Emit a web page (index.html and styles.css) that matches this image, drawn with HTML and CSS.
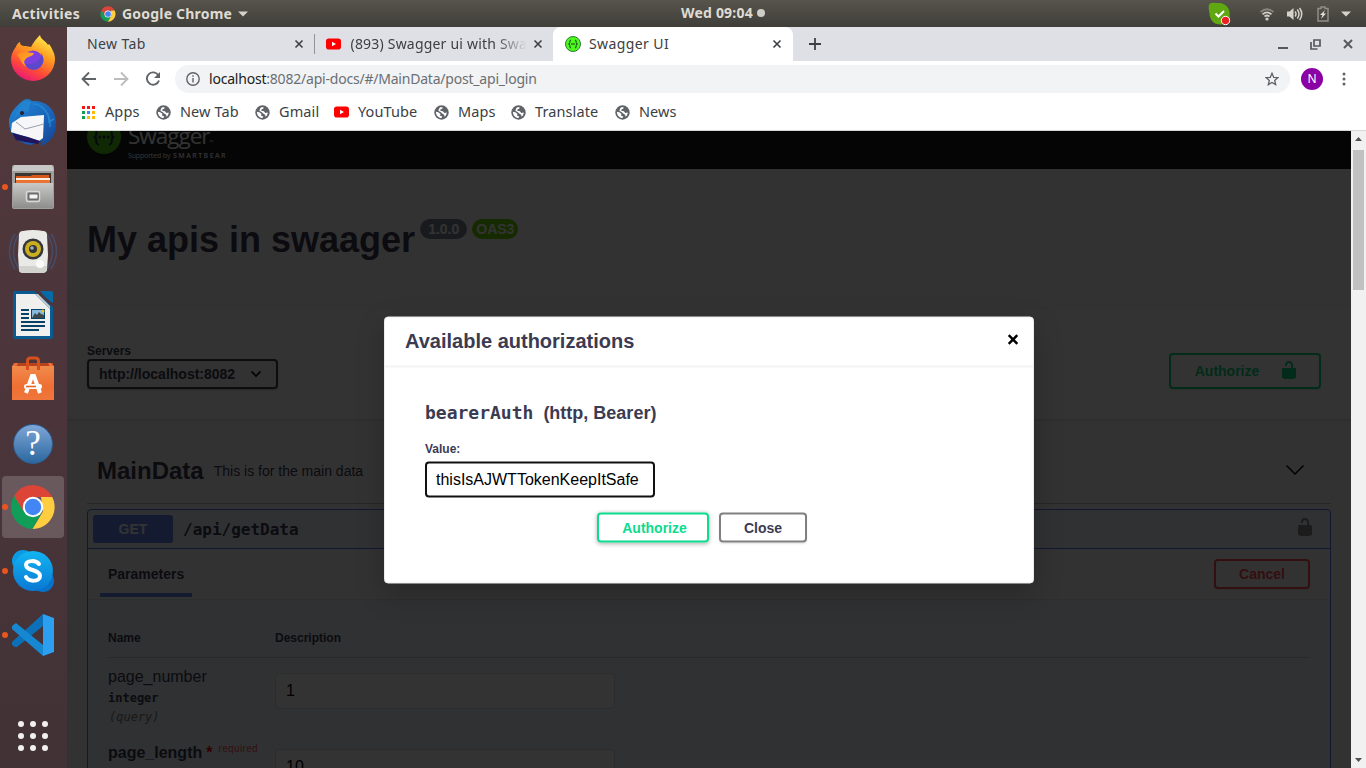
FILE: index.html
```html
<!DOCTYPE html>
<html lang="en">
<head>
<meta charset="utf-8">
<title>Swagger UI</title>
<link rel="stylesheet" href="styles.css">
</head>
<body>
<svg class="defs" width="0" height="0">
  <defs>
    <linearGradient id="fox" x1="0.8" y1="0" x2="0.3" y2="1"><stop offset="0" stop-color="#fff44f"/><stop offset=".4" stop-color="#ff9a20"/><stop offset=".72" stop-color="#ff4a38"/><stop offset="1" stop-color="#e8167a"/></linearGradient>
    <linearGradient id="foxhead" x1="0" y1="0" x2="1" y2="1"><stop offset="0" stop-color="#ff8a1e"/><stop offset="1" stop-color="#ffb52a"/></linearGradient>
    <linearGradient id="bird" x1="0" y1="0" x2="1" y2="1"><stop offset="0" stop-color="#1f8ad8"/><stop offset=".6" stop-color="#1b62b8"/><stop offset="1" stop-color="#153f8c"/></linearGradient>
    <linearGradient id="steel" x1="0" y1="0" x2="0" y2="1"><stop offset="0" stop-color="#c9c9c7"/><stop offset="1" stop-color="#8e8e8c"/></linearGradient>
    <linearGradient id="bag" x1="0" y1="0" x2="0" y2="1"><stop offset="0" stop-color="#f08b4c"/><stop offset=".6" stop-color="#ef6f32"/><stop offset="1" stop-color="#f0763c"/></linearGradient>
    <linearGradient id="skype" x1="0" y1="0" x2="0" y2="1"><stop offset="0" stop-color="#12b5f2"/><stop offset="1" stop-color="#0a78d4"/></linearGradient>
    <symbol id="chrome" viewBox="0 0 46 46">
      <path d="M23 1A22 22 0 0 0 4 12l9 16 10-15h19.200A22 22 0 0 0 23 1z" fill="#db4437"/>
      <path d="M4 12a22 22 0 0 0 18.500 33L32 28 14 28z" fill="#0f9d58"/>
      <path d="M42.200 13A22 22 0 0 1 22.500 45L33 27.500 31 13z" fill="#ffcd40"/>
      <circle cx="23" cy="23" r="10.200" fill="#fff"/><circle cx="23" cy="23" r="8.200" fill="#4285f4"/>
    </symbol>
    <symbol id="globe" viewBox="0 0 16 16"><circle cx="8" cy="8" r="7.700" fill="#5f6368"/><path d="M2 7.200 4.500 7.800 6.800 9.400 6.600 11.600 8.800 12 8 13.900C5 14 2.200 11.500 2 7.200zM6.500 2.400 9.200 2.300 8.800 4 6.700 4.700 6.800 6.100 9.500 6.600 11 8.400 13.500 8C13.600 10 12.500 11.800 11.300 12.400L10.800 10.300 8.800 9.100 7 7.500 4.800 6.300 5.200 4.300z" fill="#fff"/></symbol>
    <symbol id="tube" viewBox="0 0 15 12"><rect y=".5" width="15" height="11" rx="2.800" fill="#f00"/><path d="m6 3.700 4 2.300-4 2.300z" fill="#fff"/></symbol>
    <symbol id="x" viewBox="0 0 10 10"><path d="m1.500 1.500 7 7m0-7-7 7" stroke="#3c4043" stroke-width="1.600"/></symbol>
    <symbol id="lock" viewBox="0 0 20 20"><path d="M15.800 8H14V5.600C14 2.703 12.665 1 10 1 7.334 1 6 2.703 6 5.600V6h2v-.801C8 3.754 8.797 3 10 3c1.203 0 2 .754 2 2.199V8H4c-.553 0-1 .646-1 1.199V17c0 .549.428 1.139.951 1.307l1.197.387C5.672 18.861 6.550 19 7.100 19h5.800c.549 0 1.428-.139 1.951-.307l1.196-.387c.524-.167.953-.757.953-1.306V9.199C17 8.646 16.352 8 15.800 8z" fill="currentColor"/></symbol>
  </defs>
</svg>

<header class="panel">
  <div class="panel-left">
    <span class="activities">Activities</span>
    <svg width="16" height="16"><use href="#chrome"/></svg>
    <span class="appname">Google Chrome</span>
    <svg width="10" height="6"><path d="M0 .5h10L5 5.500z" fill="#d5d2cc"/></svg>
  </div>
  <div class="clock">Wed 09:04<i></i></div>
  <div class="tray">
    <svg class="tray-skype" width="24" height="24" viewBox="0 0 24 24"><path d="M2 1.500C4 0 8 1 11 1a10.500 10.500 0 0 1 10.500 12c1.500 5-2 10-8 9.500C6 23 1.500 18 1.500 11 .5 7 .3 3 2 1.500z" fill="#5fa812"/><path d="m7.500 11.500 3 3 5.500-5.500" fill="none" stroke="#fff" stroke-width="2"/><circle cx="17.500" cy="18.500" r="4.200" fill="#eb2020" stroke="#fff"/></svg>
    <svg class="tray-wifi" width="16" height="14" viewBox="0 0 16 14" fill="none" stroke="#d0cdc7" stroke-width="1.700"><path d="M1.500 5Q8-.5 14.500 5" opacity=".45"/><path d="M3.500 7.300q4.500-4 9 0M5.500 9.500q2.500-2 5 0"/><circle cx="8" cy="12" r="1.600" fill="#d0cdc7" stroke="none"/></svg>
    <svg class="tray-vol" width="17" height="14" viewBox="0 0 17 14"><path d="M1 4.500h2.500L7.500 1v12l-4-3.500H1z" fill="#d5d2cc"/><path d="M9 4.500q2 2.500 0 5M11.300 2.500q3.500 4.500 0 9M13.600 1q4.300 6 0 12" fill="none" stroke="#d5d2cc" stroke-width="1.500"/></svg>
    <svg class="tray-bat" width="12" height="16" viewBox="0 0 12 16"><path d="M1 2.500h3v-1.500h4v1.500h3v12.500H1z" fill="none" stroke="#908d87" stroke-width="1.500"/><path d="m8 4-5 5h2.500L4 13l5-5.500H6.500z" fill="#e5e2dd"/></svg>
    <svg width="10" height="6"><path d="M0 .5h10L5 5.500z" fill="#d5d2cc"/></svg>
  </div>
</header>

<div class="desktop">
  <nav class="dock">
    <div class="app"><svg width="46" height="48" viewBox="0 0 46 48"><path d="M5 13c1 0 1-4 5-6 0 3 2 4 5 4 2 0 5 1 6 1C23 8 26 4 30 0c1 5 5 5 8 10l1-1c3 4 6 10 6 15a22 22 0 0 1-44 0C1 20 3 16 5 13z" fill="url(#fox)"/><circle cx="23" cy="25" r="9.500" fill="#7d3fe0"/><path d="M15 29a9.500 9.500 0 0 0 17 1c3-5 1-9-1-12 2 7-7 12-16 11z" fill="#5b48cc"/><path d="M7 20c5-5 11-2 17-2-1 4-7 3-9 7-2 2 0 5 2 7C11 29 11 24 7 20z" fill="url(#foxhead)"/></svg></div>
    <div class="app"><svg width="50" height="50" viewBox="0 0 50 50"><path d="M12 5C17 0 21 0 24 3 40 2 49 14 48 27c0 10-6 18-15 21l2-5-12 4C9 45 0 35 1 22 3 13 8 9 12 5z" fill="url(#bird)"/><path d="M25 6c10 0 16 9 16 18l5-3M32 8c7 4 11 12 10 21" fill="none" stroke="#2583cc" stroke-width="1.500"/><path d="M4 25 13 19 36 17 35 40 31 43 3 34z" fill="#f6f6f8"/><path d="m8 24 9 7 19-5" fill="none" stroke="#9aa0ab"/><path d="M4 35 20 39 32 43 30 46 17 44 8 42z" fill="#20145b"/><path d="M5 23Q12 11 20 14L23 4Q15 1 12 7z" fill="#2483cf"/><circle cx="14" cy="15" r="2" fill="#251e35"/></svg></div>
    <div class="app running"><svg width="44" height="46" viewBox="0 0 44 46"><rect x="1" y="1" width="42" height="44" rx="2" fill="#9f9f9d"/><path d="M3 1h38l2 6H1z" fill="#c8c8c6"/><path d="M4 9h36v11H4z" fill="#3d3530"/><path d="M5 12h15l1-1h17v9H5z" fill="#d8581c"/><path d="M5 14h34v3H5z" fill="#fff0df"/><path d="M5 16h34v4H5z" fill="#ea7433"/><rect x="2" y="19" width="40" height="25" fill="url(#steel)"/><rect x="15.500" y="27.500" width="13" height="10" rx="1.500" fill="#888" stroke="#d8d8d8" stroke-width="1.500"/><rect x="18" y="30" width="9" height="5" fill="#f4f4f4" stroke="#333" stroke-width=".7"/></svg></div>
    <div class="app"><svg class="speaker" width="50" height="46" viewBox="0 0 50 46"><path d="M7 5Q-4 22 7 40M11 5Q0 22 11 40M43 5q11 17 0 35M39 5q11 17 0 35" fill="none" stroke="#3f5b86" stroke-width="1.500" opacity=".6"/><path d="M15 2q10-2 20 0 4 0 4 4l1 20-1 15q-1 3-5 3H16q-5 0-5-3l-1-15 1-20q0-4 4-4z" fill="#e9e9e6"/><path d="M11 37h28v4q-1 3-5 3H16q-5 0-5-3z" fill="#d2d2ce"/><circle cx="25" cy="20" r="10.500" fill="#34363c"/><circle cx="25" cy="20" r="8" fill="#cbae20"/><circle cx="25" cy="20" r="4" fill="#30343b"/><circle cx="24" cy="19" r="1.800" fill="#a6aeb9"/><circle cx="32" cy="35" r="4" fill="#fafafa"/></svg></div>
    <div class="app"><svg width="40" height="48" viewBox="0 0 40 48"><path d="M1 0h20l19 16v30q0 2-2 2H2q-2 0-2-2V2q0-2 1-2z" fill="#0b5b93"/><path d="M27 0h11q2 0 2 2v10q-7-4-13-12z" fill="#0769a6"/><path d="M3 3h19l15 15v27H3z" fill="#f0f0ef"/><path d="M22 3 37 18V15L25 3z" fill="#c8cbce"/><path d="M8 18h8v2H8zm0 4h8v2H8zm0 4h8v2H8zm0 4h24v2H8zm0 4h24v2H8zm0 4h18v2H8z" fill="#064366"/><rect x="18.500" y="18.500" width="13" height="9" fill="#86b9dc" stroke="#064366"/><path d="m19 27 3-5 2 2 2-3 2 2 3 1v3z" fill="#40474a"/><circle cx="30" cy="20" r="1.500" fill="#f2c232"/></svg></div>
    <div class="app"><svg class="bag" width="42" height="44" viewBox="0 0 42 44"><path d="M1 7h40v5H1z" fill="#b8421b"/><path d="m0 10 3-3h3L4 11zm42 0-3-3h-3l2 4z" fill="#ee7038"/><path d="M0 10h42v34H0z" fill="url(#bag)"/><path d="M15.500 14V5q0-3 3-3h5q3 0 3 3v9" fill="none" stroke="#d6501e" stroke-width="3"/><path d="m14 37 6-17h2l6 17" fill="none" stroke="#fff" stroke-width="4"/><rect x="12" y="28" width="18" height="5" rx="2.500" fill="#fff"/><path d="M14 30.500h10" stroke="#e9682b" stroke-width="1.700"/></svg></div>
    <div class="app"><div class="help">?</div></div>
    <div class="app running active"><svg width="46" height="46"><use href="#chrome"/></svg></div>
    <div class="app running"><svg width="44" height="44" viewBox="0 0 44 44"><circle cx="12" cy="12" r="11" fill="#0b9be4"/><circle cx="32" cy="32" r="11" fill="#0872c8"/><circle cx="22" cy="22" r="20" fill="url(#skype)"/><path d="M28 15c-3-4-13-4-13 1 0 6 14 4 14 11 0 6-11 6-14 1" fill="none" stroke="#fff" stroke-width="4" stroke-linecap="round"/></svg></div>
    <div class="app running"><svg width="42" height="42" viewBox="0 0 42 42"><path d="M31 0 0 28v3l3 2h2L31 12z" fill="#0b70b8"/><path d="M0 12l4-3 27 22v11L0 15z" fill="#1688d2"/><path d="m31 0 11 4v34l-11 4z" fill="#2c9ff0"/></svg></div>
    <div class="grid-button"><svg width="30" height="30" fill="#f2f1f0"><circle cx="3" cy="3" r="3"/><circle cx="15" cy="3" r="3"/><circle cx="27" cy="3" r="3"/><circle cx="3" cy="15" r="3"/><circle cx="15" cy="15" r="3"/><circle cx="27" cy="15" r="3"/><circle cx="3" cy="27" r="3"/><circle cx="15" cy="27" r="3"/><circle cx="27" cy="27" r="3"/></svg></div>
  </nav>

  <main class="browser">
    <div class="tabs">
      <div class="tab first"><span>New Tab</span><svg width="10" height="10"><use href="#x"/></svg></div>
      <div class="tab second"><svg width="15" height="12"><use href="#tube"/></svg><span class="fade">(893) Swagger ui with Swag</span><svg width="10" height="10"><use href="#x"/></svg></div>
      <div class="tab current"><svg width="16" height="16" viewBox="0 0 16 16"><circle cx="8" cy="8" r="7.500" fill="#4dfb1a" stroke="#2b7b38"/><path d="M6 4Q4.500 4 4.800 6.500 4.800 8 3.500 8q1.300 0 1.300 1.500Q4.500 12 6 12M10 4q1.500 0 1.200 2.500 0 1.500 1.300 1.500-1.300 0-1.300 1.500Q11.500 12 10 12M6 8h4" fill="none" stroke="#173b25"/></svg><span>Swagger UI</span><svg width="10" height="10"><use href="#x"/></svg></div>
      <svg class="plus" width="12" height="12"><path d="M6 0v12M0 6h12" stroke="#3c4043" stroke-width="1.800"/></svg>
      <div class="window-buttons">
        <svg width="10" height="12"><path d="M0 10h10" stroke="#55595e" stroke-width="2"/></svg>
        <svg width="11" height="11" fill="none" stroke="#55595e" stroke-width="1.700"><path d="M4 1h6v6H4zM1 3v7h6.500"/></svg>
        <svg width="10" height="10"><path d="m1 1 8 8m0-8L1 9" stroke="#55595e" stroke-width="2"/></svg>
      </div>
    </div>
    <div class="toolbar">
      <svg width="16" height="16" fill="none" stroke="#5f6368" stroke-width="1.800"><path d="M15 8H2M8 1.500 1.500 8 8 14.500"/></svg>
      <svg width="16" height="16" fill="none" stroke="#babcbe" stroke-width="1.800"><path d="M1 8h13M8 1.500 14.500 8 8 14.500"/></svg>
      <svg width="16" height="16" viewBox="0 0 16 16"><path d="M13.500 4.500A6.200 6.200 0 1 0 14 9.500" fill="none" stroke="#5f6368" stroke-width="1.900"/><path d="M15 1v6H9z" fill="#5f6368"/></svg>
      <div class="address">
        <svg width="14" height="14" fill="none" stroke="#5f6368" stroke-width="1.400"><circle cx="7" cy="7" r="6.200"/><path d="M7 6v4.500M7 3.300v1.500"/></svg>
        <span><b>localhost</b>:8082/api-docs/#/MainData/post_api_login</span>
        <svg width="14" height="14" viewBox="0 0 14 14"><path d="m7 1.300 1.700 4 4.200.3-3.200 2.800 1 4.200L7 10.400l-3.700 2.200 1-4.200L1.100 5.600l4.200-.3z" fill="none" stroke="#5f6368" stroke-width="1.300"/></svg>
      </div>
      <div class="avatar">N</div>
      <svg width="4" height="14" fill="#5f6368"><circle cx="2" cy="2" r="1.500"/><circle cx="2" cy="7" r="1.500"/><circle cx="2" cy="12" r="1.500"/></svg>
    </div>
    <div class="bookmarks">
      <a class="bm-apps"><svg width="13" height="13"><path d="M0 0h3v3H0zM5 0h3v3H5zM10 0h3v3h-3z" fill="#f01818"/><path d="M0 5h3v3H0zM0 10h3v3H0z" fill="#10a050"/><path d="M5 5h3v3H5z" fill="#4285f4"/><path d="M10 5h3v3h-3zM5 10h3v3H5zM10 10h3v3h-3z" fill="#f9bd05"/></svg><span>Apps</span></a>
      <a class="bm-newtab"><svg width="15" height="15"><use href="#globe"/></svg><span>New Tab</span></a>
      <a class="bm-gmail"><svg width="15" height="15"><use href="#globe"/></svg><span>Gmail</span></a>
      <a class="bm-youtube"><svg width="15" height="12"><use href="#tube"/></svg><span>YouTube</span></a>
      <a class="bm-maps"><svg width="15" height="15"><use href="#globe"/></svg><span>Maps</span></a>
      <a class="bm-translate"><svg width="15" height="15"><use href="#globe"/></svg><span>Translate</span></a>
      <a class="bm-news"><svg width="15" height="15"><use href="#globe"/></svg><span>News</span></a>
    </div>

    <div class="viewport">
      <div class="page">
        <div class="swagger-bar">
          <svg width="34" height="34" viewBox="0 0 34 34"><circle cx="17" cy="17" r="17" fill="#55c71a"/><path d="M12 9.500q-3 0-2.700 4 .2 3-2.300 3.500 2.500.5 2.300 3.500-.3 4 2.700 4M22 9.500q3 0 2.700 4-.2 3 2.300 3.500-2.500.5-2.300 3.500.3 4-2.700 4" fill="none" stroke="#173647" stroke-width="2"/><g fill="#173647"><circle cx="12.800" cy="17" r="1.400"/><circle cx="17" cy="17" r="1.400"/><circle cx="21.200" cy="17" r="1.400"/></g></svg>
          <div class="brand"><div class="brand-name">Swagger<small>™</small></div><div class="brand-sub">Supported by <b>SMARTBEAR</b></div></div>
        </div>
        <div class="info"><h1>My apis in swaager</h1><span class="pill">1.0.0</span><span class="pill oas">OAS3</span></div>
        <div class="scheme">
          <div class="servers"><label>Servers</label><div class="select">http://localhost:8082<svg width="12" height="8"><path d="m1.500 1.500 4.500 4.500 4.500-4.500" fill="none" stroke="#000" stroke-width="1.600"/></svg></div></div>
          <div class="btn authorize-top">Authorize<svg width="20" height="20"><use href="#lock"/></svg></div>
        </div>
        <div class="tag"><h2>MainData</h2><p>This is for the main data</p><svg width="20" height="12"><path d="m1.500 1.500 8.500 8.500 8.500-8.500" fill="none" stroke="#000" stroke-width="1.500"/></svg></div>
        <section class="operation">
          <div class="summary"><span class="method">GET</span><code>/api/getData</code><svg width="20" height="20"><use href="#lock"/></svg></div>
          <div class="op-head"><h3>Parameters</h3><div class="btn cancel">Cancel</div></div>
          <div class="params">
            <div class="row head"><span>Name</span><span>Description</span></div>
            <div class="row"><div class="name">page_number<code>integer</code><em>(query)</em></div><div class="field">1</div></div>
            <div class="row"><div class="name required">page_length<i>*</i><small>required</small></div><div class="field">10</div></div>
          </div>
        </section>
        <div class="backdrop">
          <div class="modal">
            <div class="modal-head"><h3>Available authorizations</h3><svg width="12" height="12"><path d="m1.700 1.700 8.600 8.600m0-8.600-8.600 8.600" stroke="#000" stroke-width="2.400"/></svg></div>
            <div class="modal-body">
              <h4><code>bearerAuth</code> (http, Bearer)</h4>
              <label>Value:</label>
              <div class="token">thisIsAJWTTokenKeepItSafe</div>
              <div class="actions"><div class="btn authorize">Authorize</div><div class="btn close">Close</div></div>
            </div>
          </div>
        </div>
      </div>
      <div class="scrollbar"><svg width="7" height="4"><path d="M0 4h7L3.500 0z" fill="#505050"/></svg><div class="thumb"></div><svg width="7" height="4"><path d="M0 0h7L3.500 4z" fill="#505050"/></svg></div>
    </div>
  </main>
</div>
</body>
</html>
```
FILE: styles.css
```css
* { box-sizing: border-box; }
body { margin: 0; width: 1366px; height: 768px; overflow: hidden; font-family: "Noto Sans", "Open Sans", sans-serif; color: #3c4043; }
h1, h2, h3, h4, p { margin: 0; }
svg { display: block; flex: none; }
.defs { position: absolute; }

/* Desktop panel */
.panel { height: 27px; display: flex; align-items: center; background: linear-gradient(#57544c, #3f3e39); color: #dfdbd2; font-weight: 700; font-size: 14px; line-height: 27px; white-space: nowrap; }
.panel-left { display: flex; align-items: center; padding-left: 12px; width: 681px; flex: none; }
.activities { width: 88px; letter-spacing: .3px; }
.appname { margin: 0 6px 0 6px; width: 110px; letter-spacing: .2px; }
.clock { display: flex; align-items: center; width: 84px; height: 26px; line-height: 26px; padding-bottom: 1px; font-size: 14px; letter-spacing: .2px; flex: none; }
.clock i { width: 8px; height: 8px; border-radius: 50%; background: #d0cdc7; margin-left: auto; }
.tray { flex: 1; display: flex; align-items: center; justify-content: flex-end; padding-right: 15px; }
.tray-wifi { margin-left: 27px; }
.tray-vol { margin-left: 11px; }
.tray-bat { margin: 0 12px 0 14px; }

/* Launcher */
.desktop { display: flex; height: 741px; }
.dock { width: 67px; flex: none; background: linear-gradient(#52393b, #4b353b 50%, #413236); display: flex; flex-direction: column; }
.app { height: 64px; width: 66px; flex: none; display: flex; align-items: center; justify-content: center; position: relative; }
.app.active::after { content: ""; position: absolute; inset: 1px 2px; background: #ffffff2e; border-radius: 4px; z-index: 0; }
.app svg { position: relative; z-index: 1; }
.running::before { content: ""; position: absolute; left: 2px; top: 29px; width: 6px; height: 6px; border-radius: 50%; background: #e95420; z-index: 1; }
.speaker { margin-top: 2px; }
.bag { margin-bottom: 3px; }
.help { width: 40px; height: 40px; margin-top: 1px; border-radius: 50%; border: 1px solid #2d5f95; background: linear-gradient(#7fa6d8, #2b689f); color: #fff; font: 35px/38px "Liberation Serif", serif; text-align: center; }
.grid-button { margin-top: 54px; padding-left: 18px; }

/* Browser chrome */
.browser { flex: 1; min-width: 0; display: flex; flex-direction: column; background: #fff; }
.tabs { height: 34px; flex: none; background: #dee0e6; display: flex; align-items: center; font-size: 14px; letter-spacing: .2px; }
.tab { height: 34px; display: flex; align-items: center; justify-content: space-between; white-space: nowrap; }
.tab span { padding-bottom: 2px; }
.first { width: 247px; padding: 0 10px 0 20px; letter-spacing: .4px; }
.second { width: 239px; padding: 0 10px 0 12px; position: relative; }
.second::before { content: ""; width: 1px; height: 20px; background: #909398; position: absolute; left: 0; top: 7px; }
.fade { width: 176px; overflow: hidden; mask-image: linear-gradient(90deg, #000 82%, transparent); margin: 0 5px 0 8px; }
.current { width: 240px; background: #fff; border-radius: 8px 8px 0 0; padding: 0 11px 0 12px; letter-spacing: .4px; }
.current span { margin-right: auto; margin-left: 8px; }
.plus { margin-left: 16px; }
.window-buttons { margin-left: auto; padding-right: 13px; display: flex; align-items: center; gap: 22px; }
.toolbar { height: 36px; flex: none; display: flex; align-items: center; padding: 0 20px 0 14px; }
.toolbar > svg:nth-child(-n+3) { margin-right: 16px; }
.toolbar > svg:nth-child(3) { margin-right: 14px; }
.address { flex: 1; height: 28px; border-radius: 14px; background: #f1f3f4; display: flex; align-items: center; padding: 0 11px; font-size: 14px; letter-spacing: -.21px; color: #6b6f74; }
.address span { flex: 1; margin: 0 0 2px 9px; }
.address b { font-weight: 400; color: #202124; }
.avatar { width: 22px; height: 22px; border-radius: 50%; background: #8a00a5; color: #fff; font-size: 12px; line-height: 22px; text-align: center; margin: 0 19px 0 11px; }
.bookmarks { height: 34px; flex: none; display: flex; padding: 0 0 3px 15px; border-bottom: 1px solid #d5d8d8; font-size: 14.500px; letter-spacing: .1px; }
.bookmarks a { display: flex; align-items: center; gap: 9px; white-space: nowrap; }
.bookmarks span { margin-bottom: 3px; }
.bm-apps { width: 74px; }
.bm-apps span { margin-left: 1px; }
.bm-newtab { width: 99px; }
.bm-gmail { width: 79px; }
.bm-youtube { width: 100px; }
.bm-maps { width: 77px; }
.bm-translate { width: 104px; }
.viewport { flex: 1; min-height: 0; display: flex; }
.scrollbar { width: 15px; background: #f1f1f1; display: flex; flex-direction: column; align-items: center; padding: 6px 0; }
.thumb { width: 11px; height: 140px; background: #c1c1c1; margin: 9px 0 auto; }

/* API page */
.page { flex: 1; min-width: 0; position: relative; overflow: hidden; background: #fafafa; font-family: "Liberation Sans", Arial, sans-serif; color: #3b3b52; }
.page code { font-family: "DejaVu Sans Mono", monospace; font-weight: 600; }
.swagger-bar { height: 38px; background: #1b1b1b; display: flex; padding-left: 20px; color: #fff; overflow: hidden; }
.swagger-bar > svg { margin-top: -11px; }
.brand { margin: -12px 0 0 7px; font-family: "Open Sans", sans-serif; white-space: nowrap; }
.brand-name { font-size: 22.500px; line-height: 34px; font-weight: 400; letter-spacing: -1px; }
.brand-name small { font-size: 5px; }
.brand-sub { font-size: 7px; line-height: 9px; margin-top: -8px; letter-spacing: -.15px; }
.brand-sub b { font-weight: 600; letter-spacing: 1.450px; margin-left: 1px; }
.info { height: 141px; padding: 50px 20px 0; display: flex; }
.info h1 { font-size: 36px; line-height: 41px; white-space: nowrap; }
.pill { height: 20px; line-height: 20px; border-radius: 20px; padding: 0 8px; background: #7d8492; color: #fff; font-size: 14px; font-weight: 700; margin-left: 5px; }
.oas { background: #6fcf04; padding: 0 4px; margin-left: 5px; }
.scheme { height: 109px; background: #fff; box-shadow: 0 1px 2px #00000026; padding: 34px 30px 30px 20px; display: flex; justify-content: space-between; }
.servers label { display: block; font-size: 12px; line-height: 14px; font-weight: 700; margin-bottom: 1px; }
.select { width: 191px; height: 30px; border: 2px solid #41444e; border-radius: 4px; box-shadow: 0 1px 2px #00000040; background: #f7f7f7; padding: 0 14px 0 10px; display: flex; align-items: center; justify-content: space-between; font-size: 14px; font-weight: 700; }
.btn { border: 2px solid #808080; border-radius: 4px; height: 30px; display: flex; align-items: center; justify-content: center; font-size: 14px; font-weight: 700; box-shadow: 0 1px 2px #0000001a; }
.authorize-top { width: 152px; height: 36px; margin-top: 9px; padding-left: 4px; color: #0bd884; border-color: #0bd884; gap: 20px; }
.authorize-top svg { margin-bottom: 2px; }
.tag { margin: 32px 20px 0; height: 53px; padding: 0 26px 0 10px; border-bottom: 1px solid #3b41514d; display: flex; align-items: flex-start; }
.tag h2 { font-size: 24px; line-height: 40px; }
.tag p { font-size: 14px; line-height: 40px; margin-left: 10px; }
.tag svg { margin: 13px 0 0 auto; }
.operation { margin: 5px 20px 0; height: 300px; border: 1px solid #5a78f0; border-radius: 4px; background: #ebf3fb; }
.summary { height: 39px; border-bottom: 1px solid #5a78f0; display: flex; align-items: center; padding: 0 15px 0 5px; }
.method { width: 80px; height: 28px; background: #6482f0; border-radius: 3px; color: #fff; text-align: center; font-size: 14px; line-height: 28px; font-weight: 700; margin-right: 10px; }
.summary code { font-size: 16px; }
.summary svg { margin-left: auto; color: #8a8a8a; margin-bottom: 4px; }
.op-head { height: 51px; background: #fbfbfc; border-bottom: 1px solid #dde3e8; padding: 0 20px 0 12px; display: flex; justify-content: space-between; align-items: center; }
.op-head h3 { align-self: flex-start; height: 48px; width: 92px; font-size: 14px; line-height: 50px; padding-left: 8px; border-bottom: 4px solid #6482f0; }
.cancel { width: 96px; color: #ff4a50; border-color: #ff4a50; }
.params { padding: 20px 20px 0; }
.row { display: grid; grid-template-columns: 167px 1fr; height: 76px; padding-top: 15px; }
.head { height: 38px; padding: 11px 0 0; border-bottom: 1px solid #3b415133; font-size: 12px; line-height: 14px; font-weight: 700; }
.name { font-size: 16px; line-height: 18px; margin-top: -5px; }
.name code { display: block; font-size: 12px; line-height: 14px; margin-top: 5px; }
.name em { display: block; font: italic 12px/14px "DejaVu Sans Mono", monospace; color: #808080; margin: 5px 0 0 1px; }
.required { font-weight: 700; }
.required i { color: #f00; font-style: normal; margin-left: 4px; }
.required small { font-size: 10px; letter-spacing: .35px; font-weight: 400; color: #ff5060; margin-left: 6px; vertical-align: 6px; line-height: 10px; }
.field { width: 340px; height: 36px; border: 1px solid #d9d9d9; border-radius: 4px; background: #fff; color: #000; font-size: 16px; line-height: 34px; padding-left: 10px; }

/* Authorization dialog */
.backdrop { position: absolute; inset: 0; background: rgba(0, 0, 0, .8); padding: 186px 0 0 317px; }
.modal { width: 650px; height: 267px; border: 1px solid #ebebeb; border-radius: 4px; background: #fff; box-shadow: 0 10px 30px rgba(0, 0, 0, .2); transform: translateY(-.5px); }
.modal-head { height: 50px; border-bottom: 2px solid #f4f4f4; display: flex; align-items: center; justify-content: space-between; padding: 0 14px 1px 20px; }
.modal-head h3 { font-size: 20px; }
.modal-head svg { margin-bottom: 3px; }
.modal-body { padding: 34px 40px; }
.modal h4 { font-size: 18px; line-height: 22px; white-space: nowrap; }
.modal h4 code { margin-right: 5px; }
.modal label { display: block; font-size: 12px; line-height: 14px; font-weight: 700; margin: 18px 0 6px; }
.token { width: 230px; height: 36px; border: 2px solid #101010; border-radius: 4px; color: #000; font-size: 16px; line-height: 32px; padding-left: 9px; }
.actions { display: flex; justify-content: center; gap: 10px; padding-right: 14px; margin-top: 15px; }
.authorize { width: 112px; color: #0bdc8d; border-color: #0bdc8d; box-shadow: 0 1px 4px #00000050; padding-left: 3px; }
.close { width: 88px; }
```
